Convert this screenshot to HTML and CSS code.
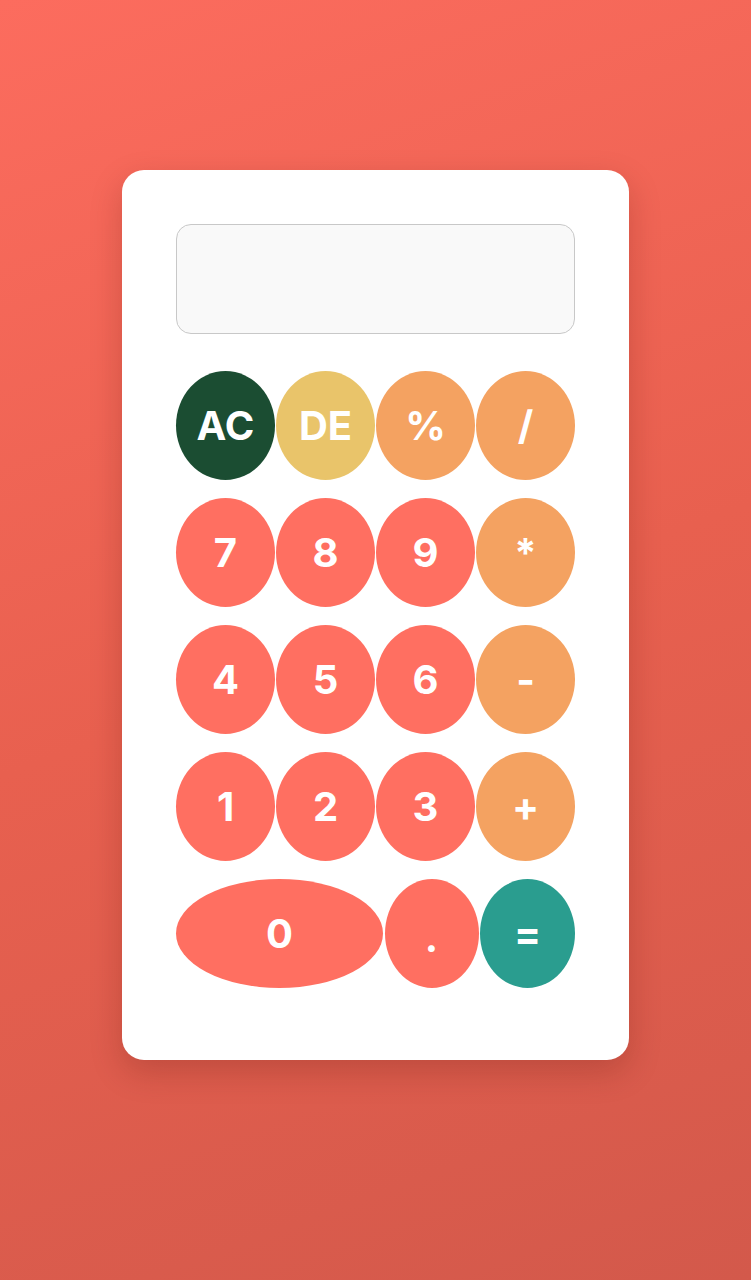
FILE: index.html
```html
<!DOCTYPE html>
<html lang="en">
<head>
<meta charset="utf-8">
<title>Calculator</title>
<link rel="stylesheet" href="styles.css">
</head>
<body>
<main class="page">
  <div class="calculator">
    <div class="display"></div>
    <div class="keys">
      <button class="key key-ac">AC</button>
      <button class="key key-de">DE</button>
      <button class="key key-op">%</button>
      <button class="key key-op">/</button>
      <button class="key key-num">7</button>
      <button class="key key-num">8</button>
      <button class="key key-num">9</button>
      <button class="key key-op">*</button>
      <button class="key key-num">4</button>
      <button class="key key-num">5</button>
      <button class="key key-num">6</button>
      <button class="key key-op">-</button>
      <button class="key key-num">1</button>
      <button class="key key-num">2</button>
      <button class="key key-num">3</button>
      <button class="key key-op">+</button>
    </div>
    <div class="last-row">
      <button class="key key-num key-zero">0</button>
      <button class="key key-num key-dot">.</button>
      <button class="key key-eq">=</button>
    </div>
  </div>
</main>
</body>
</html>
```

FILE: styles.css
```css
html, body {
  margin: 0;
  padding: 0;
}

body {
  min-height: 1280px;
  background: linear-gradient(160deg, #fc6c5e 0%, #e8604f 50%, #d3594b 100%);
  font-family: Inter, "Liberation Sans", Arial, sans-serif;
}

.page {
  display: flex;
  justify-content: center;
  padding-top: 170px;
}

.calculator {
  width: 399px;
  padding: 54px 54px 72px;
  background: #ffffff;
  border-radius: 22px;
  box-shadow: 0 12px 32px rgba(80, 20, 10, 0.22);
}

.display {
  box-sizing: border-box;
  height: 110px;
  background: #f9f9f9;
  border: 1px solid #c8c8c8;
  border-radius: 15px;
  margin-bottom: 37px;
}

.keys {
  display: grid;
  grid-template-columns: repeat(4, 99px);
  column-gap: 1px;
  row-gap: 18px;
  margin-bottom: 18px;
}

.key {
  height: 109px;
  border: none;
  border-radius: 50%;
  padding: 0;
  margin: 0;
  color: #ffffff;
  font-family: Inter, "Liberation Sans", Arial, sans-serif;
  font-weight: 700;
  font-size: 40px;
  line-height: 1;
  display: flex;
  align-items: center;
  justify-content: center;
}

.key-ac { background: #1b4d32; }
.key-de { background: #e9c46a; }
.key-op { background: #f4a261; }
.key-num { background: #ff6f61; }
.key-eq { background: #2a9d8f; }

.last-row {
  display: flex;
  gap: 1.5px;
}

.key-zero { width: 207px; }
.key-dot { width: 94px; padding-top: 8px; }
.key-eq { width: 95px; }
```
